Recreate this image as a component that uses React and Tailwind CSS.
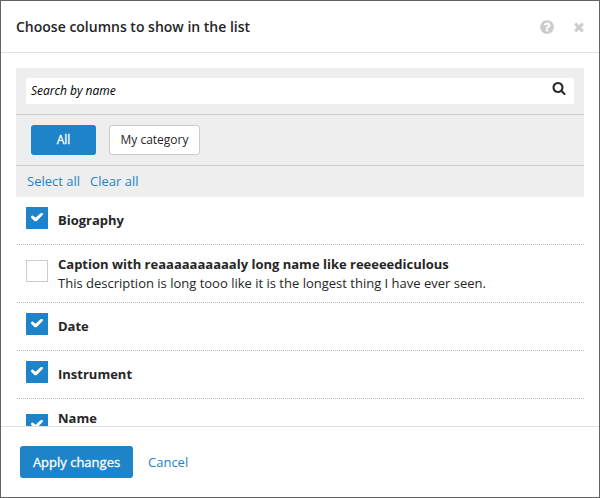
const paths = {
  search:
    'M1216 832q0-185-131.5-316.5t-316.5-131.5-316.5 131.5-131.5 316.5 131.5 316.5 316.5 131.5 316.5-131.5 131.5-316.5zm512 832q0 52-38 90t-90 38q-54 0-90-38l-343-342q-179 124-399 124-143 0-273.5-55.5t-225-150-150-225-55.5-273.5 55.5-273.5 150-225 225-150 273.5-55.5 273.5 55.5 225 150 150 225 55.5 273.5q0 220-124 399l343 343q37 37 37 90z',
  close:
    'M1490 1322q0 40-28 68l-136 136q-28 28-68 28t-68-28l-294-294-294 294q-28 28-68 28t-68-28l-136-136q-28-28-28-68t28-68l294-294-294-294q-28-28-28-68t28-68l136-136q28-28 68-28t68 28l294 294 294-294q28-28 68-28t68 28l136 136q28 28 28 68t-28 68l-294 294 294 294q28 28 28 68z',
  check:
    'M1690 490q10 70-50 130l-700 720q-110 110-220 110t-220-110l-330-330q-70-70-40-140 60-170 200-160 60 0 110 50l280 240 590-560q70-70 150-50 200 30 230 100z',
  help:
    'M1024 1376v-192q0-14-9-23t-23-9h-192q-14 0-23 9t-9 23v192q0 14 9 23t23 9h192q14 0 23-9t9-23zm256-672q0-88-55.5-163t-138.5-116-170-41q-243 0-371 213-15 24 8 42l132 100q7 6 19 6 16 0 25-12 53-68 86-92 34-24 86-24 48 0 85.5 26t37.5 59q0 38-20 61t-68 45q-63 28-115.5 86.5t-52.5 125.5v36q0 14 9 23t23 9h192q14 0 23-9t9-23q0-19 21.5-49.5t54.5-49.5q32-18 49-28.5t46-35 44.5-48 28-60.5 12.5-81zm384 192q0 209-103 385.5t-279.5 279.5-385.5 103-385.5-103-279.5-279.5-103-385.5 103-385.5 279.5-279.5 385.5-103 385.5 103 279.5 279.5 103 385.5z',
};

function Icon({ name, className }) {
  return (
    <svg viewBox="0 0 1792 1792" fill="currentColor" className={className}>
      <path d={paths[name]} />
    </svg>
  );
}

const columns = [
  { name: 'Biography', checked: true },
  {
    name: 'Caption with reaaaaaaaaaaly long name like reeeeediculous',
    description: 'This description is long tooo like it is the longest thing I have ever seen.',
    checked: false,
    tall: true,
  },
  { name: 'Date', checked: true },
  { name: 'Instrument', checked: true },
  { name: 'Name', checked: true, tall: true },
];

function Checkbox({ checked }) {
  return (
    <span
      role="checkbox"
      aria-checked={checked}
      className={
        checked
          ? 'flex size-[22px] shrink-0 justify-center bg-[#1e83c8] pt-[3px] text-white'
          : 'size-[22px] shrink-0 border border-[#cccccc] bg-white'
      }
    >
      {checked && <Icon name="check" className="size-[14px]" />}
    </span>
  );
}

function ColumnRow({ column }) {
  const { tall } = column;
  return (
    <li
      className={
        tall
          ? 'flex h-[58px] border-b border-dotted border-[#bbbbbb] pl-[9px] pt-[15px]'
          : 'flex h-12 border-b border-dotted border-[#bbbbbb] pl-[9px] pt-[10px]'
      }
    >
      <Checkbox checked={column.checked} />
      <div className={tall ? '-mt-[5px] ml-[10px] leading-[19px]' : 'mt-[4px] ml-[10px] leading-[19px]'}>
        <div className="font-bold whitespace-nowrap">{column.name}</div>
        {column.description && <div className="whitespace-nowrap">{column.description}</div>}
      </div>
    </li>
  );
}

export default function App() {
  return (
    <div className="flex h-[498px] w-[600px] flex-col overflow-hidden border border-[#626262] bg-white font-['Open_Sans',sans-serif] text-[13px] text-[#262626]">
      <header className="flex h-[52px] shrink-0 items-center border-b border-[#e1e1e1] pr-[13px] pl-[15px]">
        <h1 className="grow text-[14px] font-semibold">Choose columns to show in the list</h1>
        <Icon name="help" className="mr-[17px] size-4 text-[#cccccc]" />
        <Icon name="close" className="size-[14px] text-[#cccccc]" />
      </header>

      <main className="min-h-0 grow overflow-hidden px-[15px] pt-[15px]">
        <section className="h-[129px] bg-[#eeeeee]">
          <div className="h-[47px] border-b border-[#cccccc] px-[10px] pt-[10px]">
            <div className="flex h-[26px] justify-between bg-white pr-[8px] pl-[5px]">
              <span className="text-[12px] leading-[25px] italic text-black">Search by name</span>
              <Icon name="search" className="mt-[3px] size-[14px]" />
            </div>
          </div>
          <div className="flex h-[51px] gap-[13px] border-b border-[#cccccc] pt-[10px] pl-[15px] text-[12px]">
            <button className="h-[30px] w-[65px] rounded-[3px] bg-[#1e83c8] text-white [-webkit-text-stroke:0.3px_white]">All</button>
            <button className="h-[30px] w-[91px] rounded-[3px] border border-[#cccccc] bg-white">My category</button>
          </div>
          <div className="flex gap-[10px] pl-[11px] leading-[31px] text-[#1e83c8]">
            <a>Select all</a>
            <a>Clear all</a>
          </div>
        </section>
        <ul className="ml-px">
          {columns.map((column) => (
            <ColumnRow key={column.name} column={column} />
          ))}
        </ul>
      </main>

      <footer className="flex h-[71px] shrink-0 items-center border-t border-[#e1e1e1] pl-[19px]">
        <button className="h-8 w-[113px] rounded-[3px] bg-[#1e83c8] pt-px text-white [-webkit-text-stroke:0.3px_white]">Apply changes</button>
        <a className="ml-[15px] pt-px text-[#1e83c8]">Cancel</a>
      </footer>
    </div>
  );
}
